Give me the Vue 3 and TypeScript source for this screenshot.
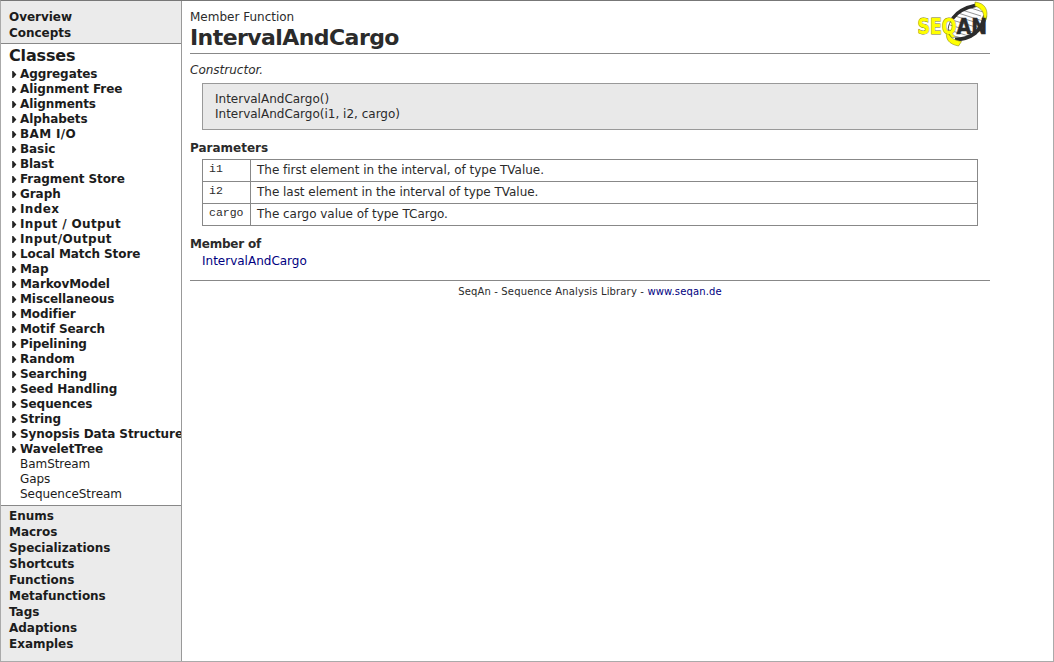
<script setup lang="ts">
interface Parameter {
  name: string
  description: string
}

const topLinks: string[] = ['Overview', 'Concepts']
const groups: string[] = [
  'Aggregates', 'Alignment Free', 'Alignments', 'Alphabets', 'BAM I/O', 'Basic', 'Blast',
  'Fragment Store', 'Graph', 'Index', 'Input / Output', 'Input/Output', 'Local Match Store',
  'Map', 'MarkovModel', 'Miscellaneous', 'Modifier', 'Motif Search', 'Pipelining', 'Random',
  'Searching', 'Seed Handling', 'Sequences', 'String', 'Synopsis Data Structures', 'WaveletTree',
]
const classes: string[] = ['BamStream', 'Gaps', 'SequenceStream']
const bottomLinks: string[] = [
  'Enums', 'Macros', 'Specializations', 'Shortcuts', 'Functions',
  'Metafunctions', 'Tags', 'Adaptions', 'Examples',
]
const parameters: Parameter[] = [
  { name: 'i1', description: 'The first element in the interval, of type TValue.' },
  { name: 'i2', description: 'The last element in the interval of type TValue.' },
  { name: 'cargo', description: 'The cargo value of type TCargo.' },
]

const isLoose = (label: string): boolean => /\bI/.test(label)
</script>

<template>
  <div class="page">
    <nav class="sidebar">
      <div class="block top">
        <a v-for="l in topLinks" :key="l" class="section">{{ l }}</a>
      </div>
      <div class="block tree">
        <a class="current">Classes</a>
        <a v-for="g in groups" :key="g" class="group" :class="{ loose: isLoose(g) }">
          <svg class="arrow" width="5" height="8" viewBox="0 0 5 8"><path d="M0.2 0H1.2L4.4 3.500 1.2 7H0.2z" fill="#222" /></svg>
          <span>{{ g }}</span>
        </a>
        <a v-for="c in classes" :key="c" class="leaf">{{ c }}</a>
      </div>
      <div class="block bottom">
        <a v-for="l in bottomLinks" :key="l" class="section">{{ l }}</a>
      </div>
    </nav>

    <main class="main">
      <header class="head">
        <div>
          <div class="kind">Member Function</div>
          <h1>IntervalAndCargo</h1>
        </div>
        <svg class="logo" width="74" height="46" viewBox="0 0 74 46">
          <path d="M45 9l19 6M41 12l25 8M38 15l26 8M35 19l27 8M33 24l26 8M32 29l23 7M33 34l16 4M51 6l15 5" fill="none" stroke="#777" stroke-width="0.8" />
          <path d="M36 17C30 24 30 32 34 37" fill="none" stroke="#444" stroke-width="1" />
          <path d="M36 17C41 10 48 6.500 60 4" fill="none" stroke="#2b2b2b" stroke-width="3.4" stroke-linecap="round" />
          <path d="M38 38.500c15 0 27-8 30-24" fill="none" stroke="#2b2b2b" stroke-width="4" />
          <path d="M58 1c10 1 14 8 11 18l-2.500-.5c1-7-1.500-11-8.500-13.500z" fill="#ff0" stroke="#8a8a20" stroke-width="0.6" />
          <path d="M32 31c0 5 4 8 12.500 9.500l-3 4.500c-10-2-13-7-12-14z" fill="#ff0" stroke="#8a8a20" stroke-width="0.6" />
          <g font-family="'DejaVu Sans', Verdana, sans-serif" font-size="21" font-weight="bold">
            <text x="0.5" y="32.800" textLength="39" lengthAdjust="spacingAndGlyphs" fill="#ff0" stroke="#77771c" stroke-width="0.9" paint-order="stroke">SEQ</text>
            <text x="39.500" y="32.800" textLength="30.500" lengthAdjust="spacingAndGlyphs" fill="#2b2b2b" stroke="#2b2b2b" stroke-width="0.5">AN</text>
          </g>
        </svg>
      </header>

      <p class="summary">Constructor.</p>
      <div class="signature">
        <div>IntervalAndCargo()</div>
        <div>IntervalAndCargo(i1, i2, cargo)</div>
      </div>

      <h2 class="params-title">Parameters</h2>
      <table class="params">
        <tbody>
          <tr v-for="p in parameters" :key="p.name">
            <td class="name">{{ p.name }}</td>
            <td class="desc">{{ p.description }}</td>
          </tr>
        </tbody>
      </table>

      <h2 class="member-title">Member of</h2>
      <a class="member">IntervalAndCargo</a>

      <footer class="foot">SeqAn - Sequence Analysis Library - <a>www.seqan.de</a></footer>
    </main>
  </div>
</template>

<style>
body {
  margin: 0;
  overflow: hidden;
}
</style>

<style scoped>
.page {
  box-sizing: border-box;
  display: flex;
  width: 1054px;
  height: 662px;
  border: 1px solid #aaa;
  border-top-color: #777;
  background: #fff;
  font-family: 'DejaVu Sans', Verdana, sans-serif;
  font-size: 12px;
  line-height: 15px;
  color: #2b2b2b;
}
.sidebar {
  box-sizing: border-box;
  width: 181px;
  flex: none;
  display: flex;
  flex-direction: column;
  overflow: hidden;
  border-right: 1px solid #999;
  background: #ebebeb;
  color: #1c1c1c;
  white-space: nowrap;
}
.block {
  display: flex;
  flex-direction: column;
}
.top {
  padding: 8px 8px 2px;
}
.tree {
  box-sizing: border-box;
  height: 463px;
  background: #fff;
  border-top: 1px solid #888;
  border-bottom: 1px solid #888;
}
.bottom {
  padding: 2px 8px;
}
.section {
  font-weight: bold;
  line-height: 16px;
  letter-spacing: -0.03px;
}
.current {
  padding: 1px 0 0 8px;
  font-size: 16px;
  font-weight: bold;
  line-height: 22px;
  letter-spacing: -0.15px;
}
.group {
  display: flex;
  align-items: center;
  height: 15px;
  padding-left: 11px;
  gap: 3px;
  font-weight: bold;
  letter-spacing: -0.08px;
}
.group.loose {
  letter-spacing: 0.36px;
}
.arrow {
  flex: none;
}
.leaf {
  padding-left: 19px;
  letter-spacing: -0.05px;
}
.main {
  width: 800px;
  padding-left: 8px;
}
.head {
  display: flex;
  justify-content: space-between;
  height: 52px;
  border-bottom: 1px solid #888;
}
.kind {
  padding-top: 9px;
}
h1 {
  margin: 0;
  font-size: 22px;
  line-height: 26px;
  letter-spacing: -0.57px;
}
.logo {
  margin-right: -1px;
}
.summary {
  margin: 9px 0 5px;
  font-style: italic;
}
.signature {
  margin: 0 12px;
  padding: 8px 12px 7px;
  border: 1px solid #999;
  background: #e9e9e9;
}
h2 {
  margin: 0;
  font-size: 12px;
  line-height: 15px;
}
.params-title {
  margin: 11px 0 3px;
}
.params {
  width: 776px;
  margin: 0 12px;
  border-collapse: collapse;
}
.params td {
  box-sizing: border-box;
  height: 22px;
  padding: 0 6px;
  border: 1px solid #888;
  line-height: 15px;
}
.params .name {
  width: 48px;
  padding-bottom: 4px;
  font-family: 'Liberation Mono', 'Courier New', monospace;
  font-size: 11.5px;
}
.params .desc {
  letter-spacing: -0.03px;
}
.member-title {
  margin: 11px 0 2px;
  letter-spacing: -0.2px;
}
.member {
  display: block;
  margin-left: 12px;
}
.member,
.foot a {
  color: #000080;
}
.foot {
  margin-top: 11px;
  padding-top: 3px;
  border-top: 1px solid #888;
  font-size: 10px;
  letter-spacing: 0.15px;
  text-align: center;
}
</style>
